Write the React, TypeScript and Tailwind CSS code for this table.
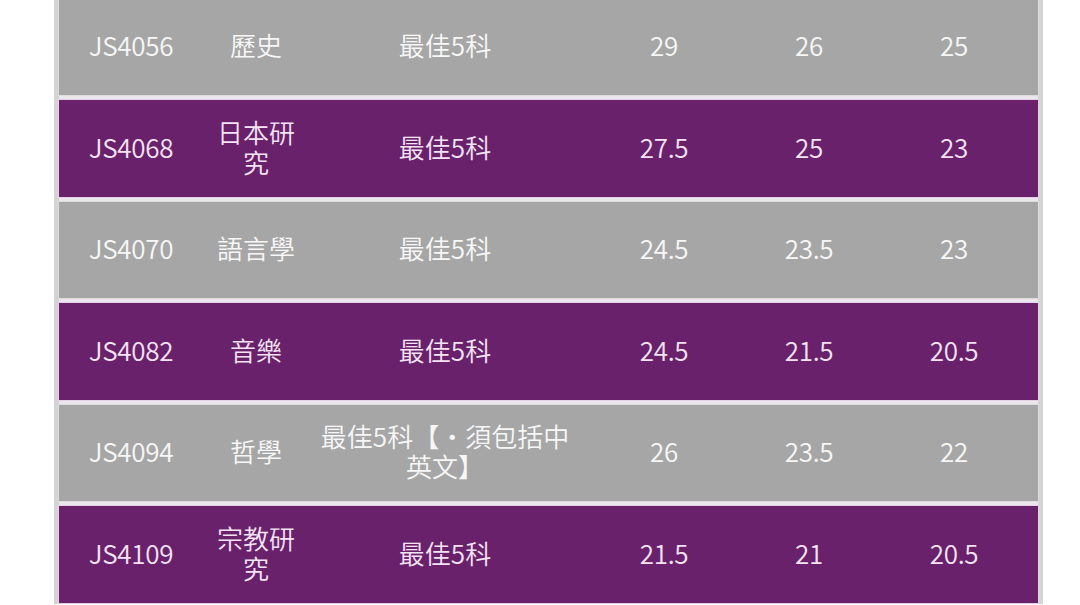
import React from "react";

type Row = { code: string; subj: string; req: string; a: string; b: string; c: string };

const rows: Row[] = [
  { code: "JS4056", subj: "歷史", req: "最佳5科", a: "29", b: "26", c: "25" },
  { code: "JS4068", subj: "日本研究", req: "最佳5科", a: "27.5", b: "25", c: "23" },
  { code: "JS4070", subj: "語言學", req: "最佳5科", a: "24.5", b: "23.5", c: "23" },
  { code: "JS4082", subj: "音樂", req: "最佳5科", a: "24.5", b: "21.5", c: "20.5" },
  { code: "JS4094", subj: "哲學", req: "最佳5科【•須包括中英文】", a: "26", b: "23.5", c: "22" },
  { code: "JS4109", subj: "宗教研究", req: "最佳5科", a: "21.5", b: "21", c: "20.5" },
];

export default function App() {
  return (
    <div
      className="w-[1080px] h-[605px] bg-white overflow-hidden"
      style={{ fontFamily: '"Noto Sans CJK TC", "Noto Sans", sans-serif' }}
    >
      <div className="ml-[54px] w-[989px] h-[605px] bg-[#d4d4d4] px-[5px]">
        <div className="flex flex-col gap-[5px] mt-[-1.5px] bg-[#ebe6eb]">
          {rows.map((r, i) => {
            const purple = i % 2 === 1;
            return (
              <div
                key={r.code}
                className={
                  "h-[96.5px] pb-[3px] flex items-center text-[26px] font-[350] leading-[30px] text-center " +
                  (purple
                    ? "bg-[#68216a] text-[#f4e3f4] outline outline-1 outline-[#e8cfe8]"
                    : "bg-[#a6a6a6] text-[#f7f7f7] outline outline-1 outline-[#dcdcdc]")
                }
              >
                <div className="w-[144px] px-2 tracking-[-0.3px]">{r.code}</div>
                <div className="w-[106px] px-2">{r.subj}</div>
                <div className="w-[272px] px-2">{r.req}</div>
                <div className="w-[166px] px-2 tracking-[-0.3px]">{r.a}</div>
                <div className="w-[124px] px-2 tracking-[-0.3px]">{r.b}</div>
                <div className="w-[166px] px-2 tracking-[-0.3px]">{r.c}</div>
              </div>
            );
          })}
        </div>
      </div>
    </div>
  );
}
